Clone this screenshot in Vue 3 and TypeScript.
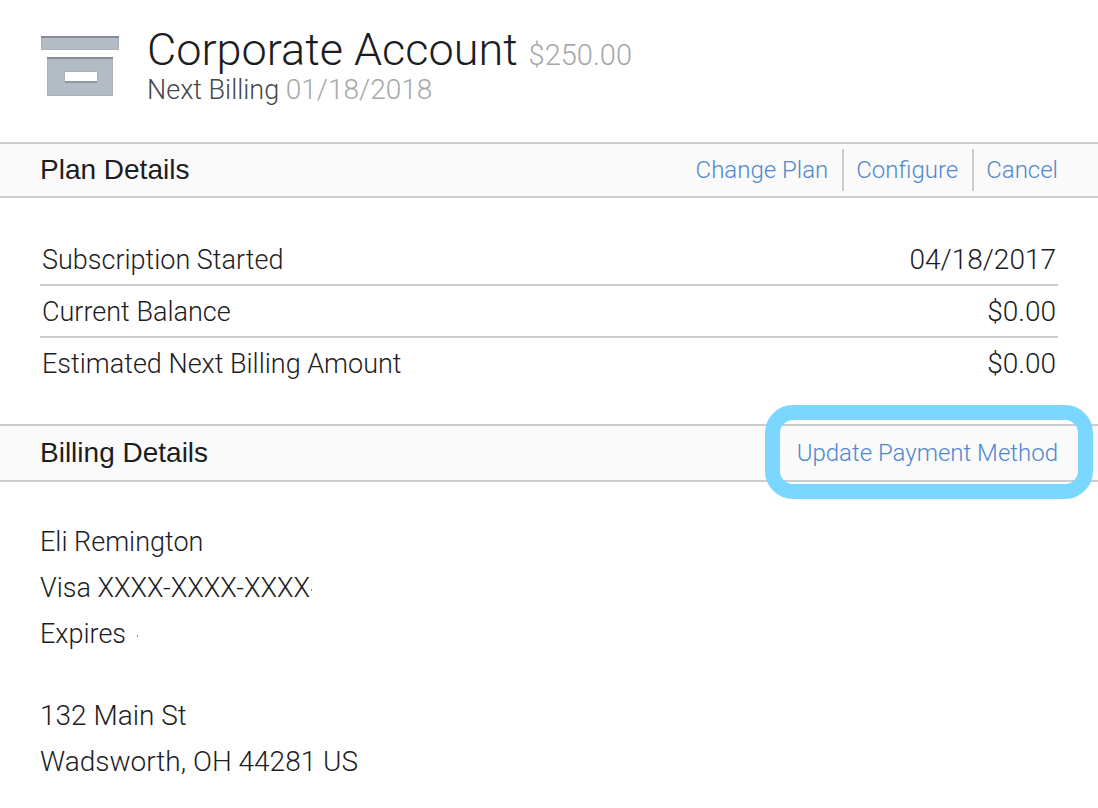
<script setup lang="ts">
interface DetailRow {
  label: string
  value: string
}

const rows: DetailRow[] = [
  { label: 'Subscription Started', value: '04/18/2017' },
  { label: 'Current Balance', value: '$0.00' },
  { label: 'Estimated Next Billing Amount', value: '$0.00' },
]

const planActions: string[] = ['Change Plan', 'Configure', 'Cancel']
</script>

<template>
  <main class="page">
    <header class="account">
      <svg class="account-icon" viewBox="0 0 78 60" aria-hidden="true">
        <rect x="0" y="0" width="78" height="14" fill="#b3bbc5" />
        <path d="M.5 1v12.5h77V1" fill="none" stroke="#a9b1bb" />
        <rect x="0" y="0" width="78" height="2" fill="#858d96" />
        <path d="M6 21h66v39H6z" fill="#b3bbc5" />
        <path d="M6.500 22v37.500h65V22" fill="none" stroke="#a9b1bb" />
        <rect x="6" y="21" width="66" height="2" fill="#858d96" />
        <rect x="23" y="35" width="34" height="12" fill="#a9b1bb" />
        <rect x="24" y="36" width="32" height="9" fill="#fff" />
        <rect x="24" y="45" width="32" height="2" fill="#8f979f" />
      </svg>
      <div>
        <h1 class="title">Corporate Account <span class="price">$250.00</span></h1>
        <p class="next">Next Billing <span class="date">01/18/2018</span></p>
      </div>
    </header>

    <section>
      <div class="bar">
        <h2 class="heading">Plan Details</h2>
        <nav class="actions">
          <a v-for="action in planActions" :key="action" class="link" href="#">{{ action }}</a>
        </nav>
      </div>
      <dl class="rows">
        <div v-for="row in rows" :key="row.label" class="row">
          <dt>{{ row.label }}</dt>
          <dd>{{ row.value }}</dd>
        </div>
      </dl>
    </section>

    <section>
      <div class="bar bar-billing">
        <h2 class="heading">Billing Details</h2>
        <a class="link highlighted" href="#">Update Payment Method</a>
      </div>
      <address class="billing">
        <p>
          Eli Remington<br />
          Visa XXXX-XXXX-XXXX<span class="speck"></span><br />
          Expires <span class="speck speck-apart"></span>
        </p>
        <p class="street">
          132 Main St<br />
          Wadsworth, OH 44281 US
        </p>
      </address>
    </section>
  </main>
</template>

<style>
body {
  margin: 0;
  background: #fff;
}
</style>

<style scoped>
.page {
  font-family: Roboto, "Liberation Sans", sans-serif;
  font-weight: 300;
  font-size: 27px;
  color: #1c1d1f;
}
h1, h2, p, dl, dd {
  margin: 0;
}
.account {
  display: flex;
  align-items: flex-start;
  gap: 28px;
  padding: 25px 41px 36px;
}
.account-icon {
  flex: none;
  width: 78px;
  height: 60px;
  margin-top: 11px;
}
.title {
  font-size: 45px;
  line-height: 49px;
  font-weight: 300;
}
.price {
  font-size: 29px;
  line-height: 28px;
  color: #a5a8ab;
}
.next {
  line-height: 32px;
  color: #45474a;
}
.date {
  font-size: 28px;
  line-height: 28px;
  color: #a5a8ab;
}
.bar {
  display: flex;
  align-items: center;
  justify-content: space-between;
  box-sizing: border-box;
  height: 56px;
  padding: 0 40px;
  border: solid #ccc;
  border-width: 2px 0;
  background: #fafafa;
}
.bar-billing {
  height: 58px;
}
.heading {
  font-family: "Liberation Sans", Arial, sans-serif;
  font-size: 28px;
  font-weight: 400;
}
.actions {
  display: flex;
}
.link {
  font-size: 24px;
  line-height: 42px;
  color: #5088cc;
  text-decoration: none;
}
.actions .link + .link {
  margin-left: 14px;
  padding-left: 12px;
  border-left: 2px solid #ccc;
}
.highlighted {
  position: relative;
}
.highlighted::after {
  content: "";
  position: absolute;
  inset: -27px -35px -25px -32px;
  border: 15px solid #7bd7ff;
  border-radius: 28px;
  pointer-events: none;
}
.rows {
  padding: 36px 40px;
}
.row {
  display: flex;
  justify-content: space-between;
  padding: 2px 2px 0;
  line-height: 48px;
}
.row dd {
  font-size: 28px;
}
.row + .row {
  border-top: 2px solid #ccc;
}
.billing {
  padding: 37px 40px 0;
  font-style: normal;
  line-height: 46px;
}
.street {
  margin-top: 36px;
  font-size: 28px;
}
.speck {
  display: inline-block;
  width: 1px;
  height: 2px;
  margin-left: 1px;
  background: #8a8a8a;
  vertical-align: middle;
}
.speck-apart {
  margin-left: 4px;
}
</style>
